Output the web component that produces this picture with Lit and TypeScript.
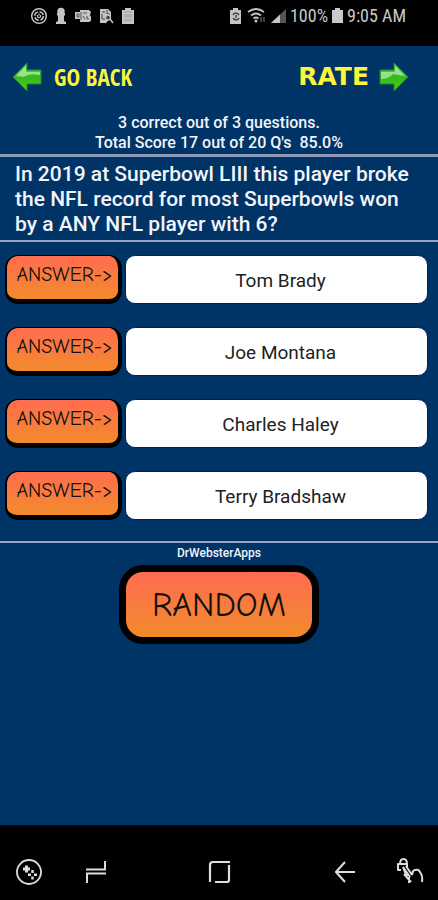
import { LitElement, html, css, svg } from "lit";
import { customElement, property, state } from "lit/decorators.js";

@customElement("status-bar")
class StatusBar extends LitElement {
  static styles = css`
    :host { display: flex; justify-content: space-between; align-items: center; height: 46px; box-sizing: border-box; padding: 0 32px 14px 30px; background: #000; color: #c9c9c9; font: 18px/20px "Roboto Condensed", Roboto, sans-serif; }
    .group { display: flex; align-items: center; gap: 6px; }
    .right { gap: 4px; }
    svg { display: block; }
  `;
  render() {
    return html`
      <div class="group">
        <svg width="18" height="18" viewBox="0 0 18 18" fill="none" stroke="#c4c4c4">
          <circle cx="9" cy="9" r="7.300" stroke-width="1.500" /><circle cx="9" cy="9" r="4.300" stroke-width="1.500" stroke-dasharray="5 1.750" /><path d="M7.500 8v1.200a1.500 1.500 0 0 0 3 0V8M9 6.500v2" stroke-width="1.200" />
        </svg>
        <svg width="14" height="18" viewBox="0 0 14 18" fill="#c4c4c4"><circle cx="7" cy="4.500" r="3.700" /><path d="M3 6h8v2l-1 1v5l2 1v2H2v-2l2-1V9L3 8z" /></svg>
        <svg width="18" height="18" viewBox="0 0 18 18">
          <path d="M6 3h9l2 2-1 3 1 2v4l-2 1H6z" fill="#c4c4c4" /><path d="M1 5h6v7H1z" fill="#c4c4c4" /><path d="M3 7h2v3H3zM9 6h4M9 9l2 3M13 9v3h2M7 5v8" fill="none" stroke="#555" />
        </svg>
        <svg width="17" height="18" viewBox="0 0 17 18">
          <path d="M2 2h8l3 3v5l-5 6H2z" fill="#c4c4c4" /><path d="M4 5h3M4 7v5h3M9 3v4h3" fill="none" stroke="#444" /><circle cx="10" cy="10.500" r="2.500" fill="#444" stroke="#c4c4c4" stroke-width="1.300" /><path d="M7 16l2-3M12 12l3 4" stroke="#c4c4c4" stroke-width="1.500" />
        </svg>
        <svg width="22" height="18" viewBox="0 0 22 18">
          <path d="M4 1h6v2h3v14H1V3h3z" fill="#c4c4c4" /><path d="M3 5h8M3 8h8M3 10h8M3 13h8" stroke="#999" />
        </svg>
      </div>
      <div class="group right">
        <svg width="14" height="18" viewBox="0 0 14 18"><path d="M4 1h5v2h3v14H1V3h3z" fill="#c4c4c4" /><path d="M4 8a3 3 0 0 1 5-1l1 1M10 11a3 3 0 0 1-5 1l-1-1M7 8v3" fill="none" stroke="#333" stroke-width="1.300" /></svg>
        <svg width="20" height="18" viewBox="0 0 20 18" fill="none" stroke="#c4c4c4" stroke-width="1.800">
          <path d="M1 5q8-6 16 0M4 8.500q5-4 10 0M6.500 11.500q2.500-2 5 0" /><circle cx="9" cy="14" r="1.500" fill="#c4c4c4" stroke="none" /><path d="M14 10v5M17 10v5" stroke="#555" stroke-width="1.500" />
        </svg>
        <svg width="15" height="18" viewBox="0 0 15 18"><path d="M0 16 15 2v14z" fill="#555" /><path d="M0 16 9 7.500V16z" fill="#c4c4c4" /></svg>
        <span>100%</span>
        <svg width="11" height="18" viewBox="0 0 11 18"><path d="M3 1h5v2h3v13H0V3h3z" fill="#c9c9c9" /></svg>
        <span>9:05 AM</span>
      </div>`;
  }
}

@customElement("answer-row")
class AnswerRow extends LitElement {
  @property() answer = "";
  static styles = css`
    :host { display: flex; gap: 3px; height: 49px; }
    .pick { width: 117px; flex: none; box-sizing: border-box; padding: 0 0 6px 4px; border: solid #000; border-width: 1px 4px 5px 2px; border-radius: 13px; background: linear-gradient(#ff6c50, #f28b2c); color: #111; font: 20px/24px "Comic Sans MS", "Comic Neue", Lato, sans-serif; white-space: nowrap; }
    .label { flex: 1; display: flex; align-items: center; justify-content: center; box-sizing: border-box; padding: 2px 0 0 8px; border: 1px solid #002050; border-radius: 10px; background: #fff; color: #222; font: 19px/24px Roboto, sans-serif; }
  `;
  render() {
    return html`<button class="pick" aria-describedby="label">ANSWER-&gt;</button><div class="label" id="label">${this.answer}</div>`;
  }
}

@customElement("app-root")
class AppRoot extends LitElement {
  @state() answers = ["Tom Brady", "Joe Montana", "Charles Haley", "Terry Bradshaw"];

  static styles = css`
    :host { display: flex; flex-direction: column; min-height: 100vh; background: #003366; color: #f2f4fa; font-family: Roboto, sans-serif; }
    button { cursor: pointer; }
    main { flex: 1; display: flex; flex-direction: column; }
    .actions { display: flex; justify-content: space-between; align-items: center; height: 66px; box-sizing: border-box; padding: 0 29px 4px 12px; }
    .action { display: flex; align-items: center; gap: 12px; padding: 0; border: 0; background: none; color: #fdf53a; }
    .back { font: bold 23px/28px "Open Sans Condensed", "Roboto Condensed", "Liberation Sans Narrow", sans-serif; }
    .rate { gap: 10px; font: bold 25px/28px "DejaVu Sans", sans-serif; }
    .score { margin: 0; text-align: center; font-size: 16px; line-height: 20px; font-weight: 500; padding: 1px 0; }
    .total { white-space: pre; }
    .question { margin: 0; padding: 5px 15px 3px; border-top: 3px solid #8d9aba; border-bottom: 2px solid #9ca3d0; font-size: 21px; line-height: 25px; font-weight: 500; }
    .answers { display: flex; flex-direction: column; gap: 23px; padding: 13px 10px 21px 5px; border-bottom: 2px solid #9ca3d0; }
    .credit { margin: 0; text-align: center; font-size: 12px; line-height: 14px; font-weight: 500; padding: 3px 0 5px; }
    .random { align-self: center; width: 200px; height: 79px; border: 7px solid #000; border-radius: 24px; background: linear-gradient(#ff6c50, #f28b2c); color: #111; font: 34px/36px "Comic Sans MS", "Comic Neue", Lato, sans-serif; }
    .nav { display: flex; justify-content: space-between; align-items: center; height: 75px; box-sizing: border-box; padding: 18px 13px 0 15px; background: #000; }
    .key { padding: 0; border: 0; background: none; }
    svg { display: block; }
  `;

  arrow(back: boolean) {
    const d = back ? "M1 15 15 1v7h14v14H15v7z" : "M29 15 15 1v7H1v14h14v7z";
    const shine = back ? "M4 14 14 4v6h14v3Q17 11 12 15z" : "M26 14 16 4v6H2v7q8 0 12-5z";
    return svg`<svg width="30" height="30" viewBox="0 0 30 30" aria-hidden="true">
      <defs><linearGradient id="green" x1="0" x2="0" y1="0" y2="1"><stop offset="0" stop-color="#5fd35a"/><stop offset=".5" stop-color="#35b81c"/><stop offset="1" stop-color="#4fd016"/></linearGradient></defs>
      <path d=${d} fill="url(#green)" stroke="#1c8a2c"/><path d=${shine} fill="#c8f5c4" opacity=".65"/></svg>`;
  }

  render() {
    return html`
      <status-bar></status-bar>
      <main>
        <div class="actions">
          <button class="action back">${this.arrow(true)}GO BACK</button>
          <button class="action rate">RATE${this.arrow(false)}</button>
        </div>
        <p class="score">3 correct out of 3 questions.<br /><span class="total">Total Score 17 out of 20 Q's  85.0%</span></p>
        <h1 class="question">In 2019 at Superbowl LIII this player broke the NFL record for most Superbowls won by a ANY NFL player with 6?</h1>
        <div class="answers">${this.answers.map((a) => html`<answer-row .answer=${a}></answer-row>`)}</div>
        <p class="credit">DrWebsterApps</p>
        <button class="random">RANDOM</button>
      </main>
      <nav class="nav">
        <button class="key" aria-label="Game tools">
          <svg width="28" height="28" viewBox="0 0 28 28" fill="none" stroke="#ddd" stroke-width="1.800"><circle cx="14" cy="14" r="12" /><path d="M11.500 7.500v7M8 11h7" stroke-width="3" /><path d="M17.500 12v3M17.500 18.500v3M13 16.800h3M19 16.800h3" stroke-width="2.500" /></svg>
        </button>
        <button class="key" aria-label="Recent apps">
          <svg width="26" height="24" viewBox="0 0 26 24" fill="none" stroke="#ddd" stroke-width="2"><path d="M23 1v8.500H4M5 23v-9.500h19" /></svg>
        </button>
        <button class="key" aria-label="Home">
          <svg width="150" height="24" viewBox="0 0 150 24" fill="none" stroke="#ddd" stroke-width="2.200"><path d="M64 22V5q0-3 3-3h17M69 22h12q2 0 2-2V5" /></svg>
        </button>
        <button class="key" aria-label="Back">
          <svg width="22" height="24" viewBox="0 0 22 24" fill="none" stroke="#ddd" stroke-width="2"><path d="M20 12H1M10 2 1 12l9 10" /></svg>
        </button>
        <button class="key" aria-label="Touch lock">
          <svg width="30" height="30" viewBox="0 0 30 30" fill="none" stroke="#ddd" stroke-width="2" stroke-linejoin="round"><path d="M6 13H3V7h9v3M5 7q0-5 3.500-5T12 7M8 10l7 10M11 9l6 9M8 10l3 8 3 0M9 17l7 8M14 20v6M17 18l1-4q5-3 7 1 3 4 2 10" /></svg>
        </button>
      </nav>`;
  }
}
